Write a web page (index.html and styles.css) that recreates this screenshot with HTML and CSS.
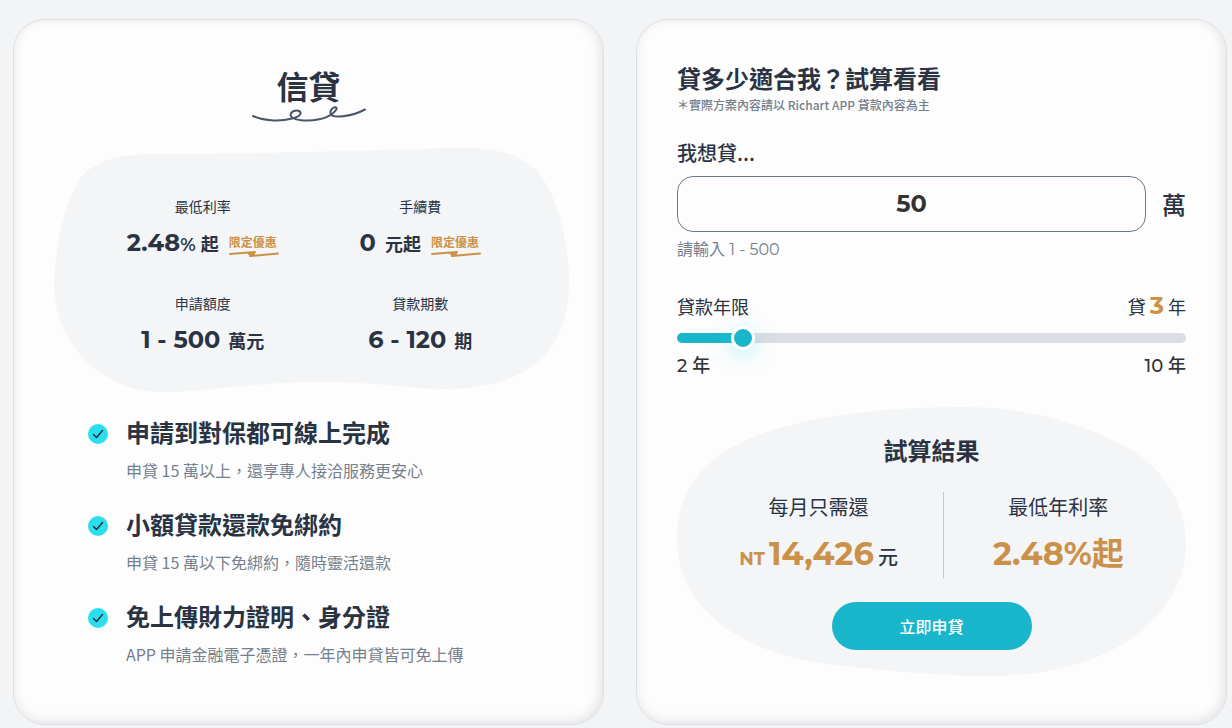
FILE: index.html
```html
<!DOCTYPE html>
<html lang="zh-Hant">
<head>
    <meta charset="UTF-8">
    <meta name="viewport" content="width=device-width, initial-scale=1.0">
    <title>信貸</title>
    <link rel="stylesheet" href="styles.css">
</head>
<body>

    <main class="loan">
        <section class="card">
            <h1 class="card-title">信貸</h1>
            <svg class="squiggle" viewBox="0 0 114 16" aria-hidden="true">
                <path d="M1 10C10 14.500 27 16 40 12.500C46 11 49 9 48.500 6.800C48 3.500 41 3.500 39 7.500C37 11.500 43 13.500 49 14.200C62 15.500 74 12.500 80 8C84 4.800 86 2 83.500 1.300C80.500 0.800 77.500 5 78.800 8C80 12 98 11.500 113 3.500"/>
            </svg>

            <div class="stats">
                <svg class="blob" viewBox="0 0 515 245" preserveAspectRatio="none" aria-hidden="true">
                    <path d="M0 136C2 100 8 62 25 33C38 14 65 7 104 7C200 7 330 3 401 1C440 0 460 6 476 18C500 35 515 90 515 135C515 195 485 243 385 242C350 241 320 235 270 235C200 235 150 245 104 245C50 243 0 200 0 136Z"/>
                </svg>
                <dl class="stats-list">
                    <div class="stat">
                        <dt>最低利率</dt>
                        <dd>
                            <span class="num">2.48<span class="percent">%</span></span>
                            <span class="unit">起</span>
                            <span class="tag">限定優惠
                                <svg viewBox="0 0 50 6" aria-hidden="true"><path d="M1 3L26 1L20 3L25 3L21 5L49 2.500"/></svg>
                            </span>
                        </dd>
                    </div>
                    <div class="stat">
                        <dt>手續費</dt>
                        <dd>
                            <span class="num num-zero">0</span>
                            <span class="unit">元起</span>
                            <span class="tag">限定優惠
                                <svg viewBox="0 0 50 6" aria-hidden="true"><path d="M1 3L26 1L20 3L25 3L21 5L49 2.500"/></svg>
                            </span>
                        </dd>
                    </div>
                    <div class="stat">
                        <dt>申請額度</dt>
                        <dd>
                            <span class="num">1 - 500</span>
                            <span class="unit unit-wide">萬元</span>
                        </dd>
                    </div>
                    <div class="stat">
                        <dt>貸款期數</dt>
                        <dd>
                            <span class="num">6 - 120</span>
                            <span class="unit unit-wide">期</span>
                        </dd>
                    </div>
                </dl>
            </div>

            <ul class="features">
                <li>
                    <svg class="check" viewBox="0 0 20 20" aria-hidden="true"><circle cx="10" cy="10" r="10"/><path d="M5.500 10.500L8.500 13.500L14.500 6.500"/></svg>
                    <div>
                        <h2>申請到對保都可線上完成</h2>
                        <p>申貸 15 萬以上，還享專人接洽服務更安心</p>
                    </div>
                </li>
                <li>
                    <svg class="check" viewBox="0 0 20 20" aria-hidden="true"><circle cx="10" cy="10" r="10"/><path d="M5.500 10.500L8.500 13.500L14.500 6.500"/></svg>
                    <div>
                        <h2>小額貸款還款免綁約</h2>
                        <p>申貸 15 萬以下免綁約，隨時靈活還款</p>
                    </div>
                </li>
                <li>
                    <svg class="check" viewBox="0 0 20 20" aria-hidden="true"><circle cx="10" cy="10" r="10"/><path d="M5.500 10.500L8.500 13.500L14.500 6.500"/></svg>
                    <div>
                        <h2>免上傳財力證明、身分證</h2>
                        <p>APP 申請金融電子憑證，一年內申貸皆可免上傳</p>
                    </div>
                </li>
            </ul>
        </section>

        <form class="card calc">
            <h2 class="calc-title">貸多少適合我？試算看看</h2>
            <p class="calc-note">＊實際方案內容請以 Richart APP 貸款內容為主</p>

            <label class="amount-label" for="amount">我想貸...</label>
            <div class="amount">
                <input id="amount" type="text" inputmode="numeric" value="50">
                <span class="amount-unit">萬</span>
            </div>
            <p class="hint">請輸入 1 - 500</p>

            <div class="years-head">
                <label for="years">貸款年限</label>
                <output for="years">貸 <b>3</b> 年</output>
            </div>
            <div class="slider" style="--fill: 13%">
                <input id="years" type="range" min="2" max="10" value="3">
            </div>
            <div class="years-range">
                <span>2 年</span>
                <span>10 年</span>
            </div>

            <div class="result">
                <svg class="blob" viewBox="0 0 510 269" preserveAspectRatio="none" aria-hidden="true">
                    <path d="M0 133C0 85 25 45 96 23C150 6 220 0 286 0C350 0 400 15 446 38C490 60 510 100 510 138C510 190 460 269 311 269C260 269 200 263 143 256C60 243 0 200 0 133Z"/>
                </svg>
                <div class="result-body">
                    <h3>試算結果</h3>
                    <div class="result-cols">
                        <div class="result-col">
                            <p>每月只需還</p>
                            <p class="price"><small>NT</small><strong>14,426</strong><span>元</span></p>
                        </div>
                        <div class="result-col">
                            <p>最低年利率</p>
                            <p class="price"><strong>2.48%起</strong></p>
                        </div>
                    </div>
                    <button type="button" class="apply">立即申貸</button>
                </div>
            </div>
        </form>
    </main>

</body>
</html>
```
FILE: styles.css
```css
* {
    box-sizing: border-box;
}

body {
    margin: 0;
    background-color: #f3f4f6;
    color: #2a3342;
    font-family: "Noto Sans CJK TC", sans-serif;
}

h1, h2, h3, p, ul, dl, dd {
    margin: 0;
    padding: 0;
}

.loan {
    display: grid;
    grid-template-columns: 1fr 1fr;
    gap: 32px;
    padding: 19px 5px 3px 13px;
}

.card {
    padding: 45px 40px 57px;
    background-color: #fdfdfd;
    border: 1px solid #dcdfe4;
    border-radius: 32px;
    box-shadow: inset -2px -2px 12px rgba(42, 51, 66, 0.14);
}

.card-title {
    font-size: 32px;
    line-height: 40px;
    font-weight: 700;
    text-align: center;
}

.squiggle {
    display: block;
    width: 114px;
    height: 16px;
    margin: 1px auto 0;
    fill: none;
    stroke: #4a5568;
    stroke-width: 2;
    stroke-linecap: round;
}

.stats,
.result {
    display: grid;
}

.stats > *,
.result > * {
    grid-area: 1 / 1;
}

.stats {
    margin: 25px -6px 0 0;
}

/* height 0 + min-height keeps the blob from sizing the row */
.blob {
    width: 100%;
    height: 0;
    min-height: 100%;
    fill: #f3f5f7;
}

.stats-list {
    display: grid;
    grid-template-columns: 1fr 1fr;
    row-gap: 34px;
    padding: 49px 40px 36px;
}

.stat {
    text-align: center;
}

.stat dt {
    font-size: 14px;
    line-height: 20px;
}

.stat dd {
    display: flex;
    justify-content: center;
    align-items: baseline;
    height: 32px;
    margin-top: 11px;
    line-height: 32px;
}

.num {
    font-family: Montserrat, Inter, sans-serif;
    font-size: 24px;
    font-weight: 700;
}

.num-zero {
    margin-right: 4px;
}

.percent {
    font-size: 18px;
    font-weight: 600;
}

.unit {
    margin-left: 5px;
    font-size: 18px;
    font-weight: 700;
}

.unit-wide {
    margin-left: 8px;
}

.tag {
    position: relative;
    align-self: flex-start;
    width: 50px;
    margin-left: 10px;
    color: #cb9148;
    font-size: 12px;
    line-height: 30px;
    font-weight: 700;
    text-align: left;
    white-space: nowrap;
}

.tag svg {
    position: absolute;
    left: 0;
    bottom: 0;
    width: 50px;
    height: 6px;
    fill: none;
    stroke: #cb9148;
    stroke-width: 2;
    stroke-linecap: round;
    stroke-linejoin: round;
}

.features {
    display: grid;
    gap: 24px;
    margin-top: 22px;
    padding: 0 34px;
    list-style: none;
}

.features li {
    display: flex;
    gap: 18px;
}

.check {
    flex: none;
    width: 20px;
    height: 20px;
    margin-top: 10px;
}

.check circle {
    fill: #29dfed;
}

.check path {
    fill: none;
    stroke: #2a3342;
    stroke-width: 1.6;
    stroke-linecap: round;
    stroke-linejoin: round;
}

.features h2 {
    font-size: 24px;
    line-height: 36px;
    font-weight: 700;
}

.features p {
    margin-top: 8px;
    color: #74808c;
    font-size: 16px;
    line-height: 24px;
}

.calc {
    padding: 40px 40px 48px;
}

.calc-title {
    font-size: 24px;
    line-height: 36px;
    font-weight: 700;
}

.calc-note {
    color: #74808c;
    font-size: 12px;
    line-height: 18px;
    font-weight: 500;
}

.amount-label {
    display: block;
    margin-top: 23px;
    font-size: 20px;
    line-height: 32px;
    font-weight: 500;
}

.amount {
    display: flex;
    align-items: center;
    gap: 16px;
    margin-top: 7px;
}

.amount input {
    flex: 1;
    min-width: 0;
    height: 56px;
    padding: 0 16px 2px;
    background-color: transparent;
    color: #333333;
    border: 1px solid #6b7789;
    border-radius: 16px;
    font-family: Montserrat, Inter, sans-serif;
    font-size: 24px;
    font-weight: 700;
    text-align: center;
}

.amount-unit {
    font-size: 24px;
    line-height: 36px;
    font-weight: 500;
}

.hint {
    margin-top: 6px;
    color: #74808c;
    font-family: Montserrat, "Noto Sans CJK TC", sans-serif;
    font-size: 16px;
    line-height: 24px;
}

.years-head,
.years-range {
    display: flex;
    justify-content: space-between;
    font-size: 18px;
    line-height: 28px;
}

.years-head {
    height: 28px;
    margin-top: 30px;
}

.years-head b {
    color: #cb9148;
    font-family: Montserrat, Inter, sans-serif;
    font-size: 24px;
}

.years-range {
    color: #333333;
    font-family: Montserrat, "Noto Sans CJK TC", sans-serif;
    font-weight: 500;
}

.slider {
    display: flex;
    height: 10px;
    margin: 13px 0 9px;
    border-radius: 5px;
    background: linear-gradient(to right, #19b6cb var(--fill), #dadde3 var(--fill));
}

.slider input {
    flex: 1;
    min-width: 0;
    margin: 0 -9px;
    background: transparent;
    appearance: none;
    -webkit-appearance: none;
}

.slider input::-webkit-slider-thumb {
    width: 24px;
    height: 24px;
    background-color: #19b6cb;
    border: 3px solid #ffffff;
    border-radius: 50%;
    box-shadow: 0 4px 20px rgba(41, 223, 237, 0.35);
    cursor: pointer;
    -webkit-appearance: none;
}

.result {
    margin-top: 27px;
}

.result-body {
    display: flex;
    flex-direction: column;
    align-items: center;
    padding: 25px 24px 26px;
}

.result h3 {
    font-size: 24px;
    line-height: 36px;
    font-weight: 700;
}

.result-cols {
    display: flex;
    margin-top: 24px;
}

.result-col {
    font-size: 20px;
    line-height: 30px;
    text-align: center;
}

.result-col:first-child {
    padding-right: 45px;
    border-right: 1px solid #c3c8d0;
}

.result-col:last-child {
    padding-left: 49px;
}

.price {
    display: flex;
    justify-content: center;
    align-items: baseline;
    height: 48px;
    margin-top: 8px;
    line-height: 48px;
}

.price small,
.price strong {
    color: #cb9148;
    font-family: Montserrat, Inter, "Noto Sans CJK TC", sans-serif;
}

.price small {
    margin-right: 4px;
    font-size: 18px;
    font-weight: 700;
}

.price strong {
    font-size: 32px;
    font-weight: 700;
}

.price span {
    margin-left: 4px;
    font-weight: 500;
}

.apply {
    width: 200px;
    height: 48px;
    margin-top: 24px;
    background-color: #19b6cb;
    color: #ffffff;
    border: none;
    border-radius: 24px;
    font-family: inherit;
    font-size: 16px;
    font-weight: 500;
    cursor: pointer;
}
```
